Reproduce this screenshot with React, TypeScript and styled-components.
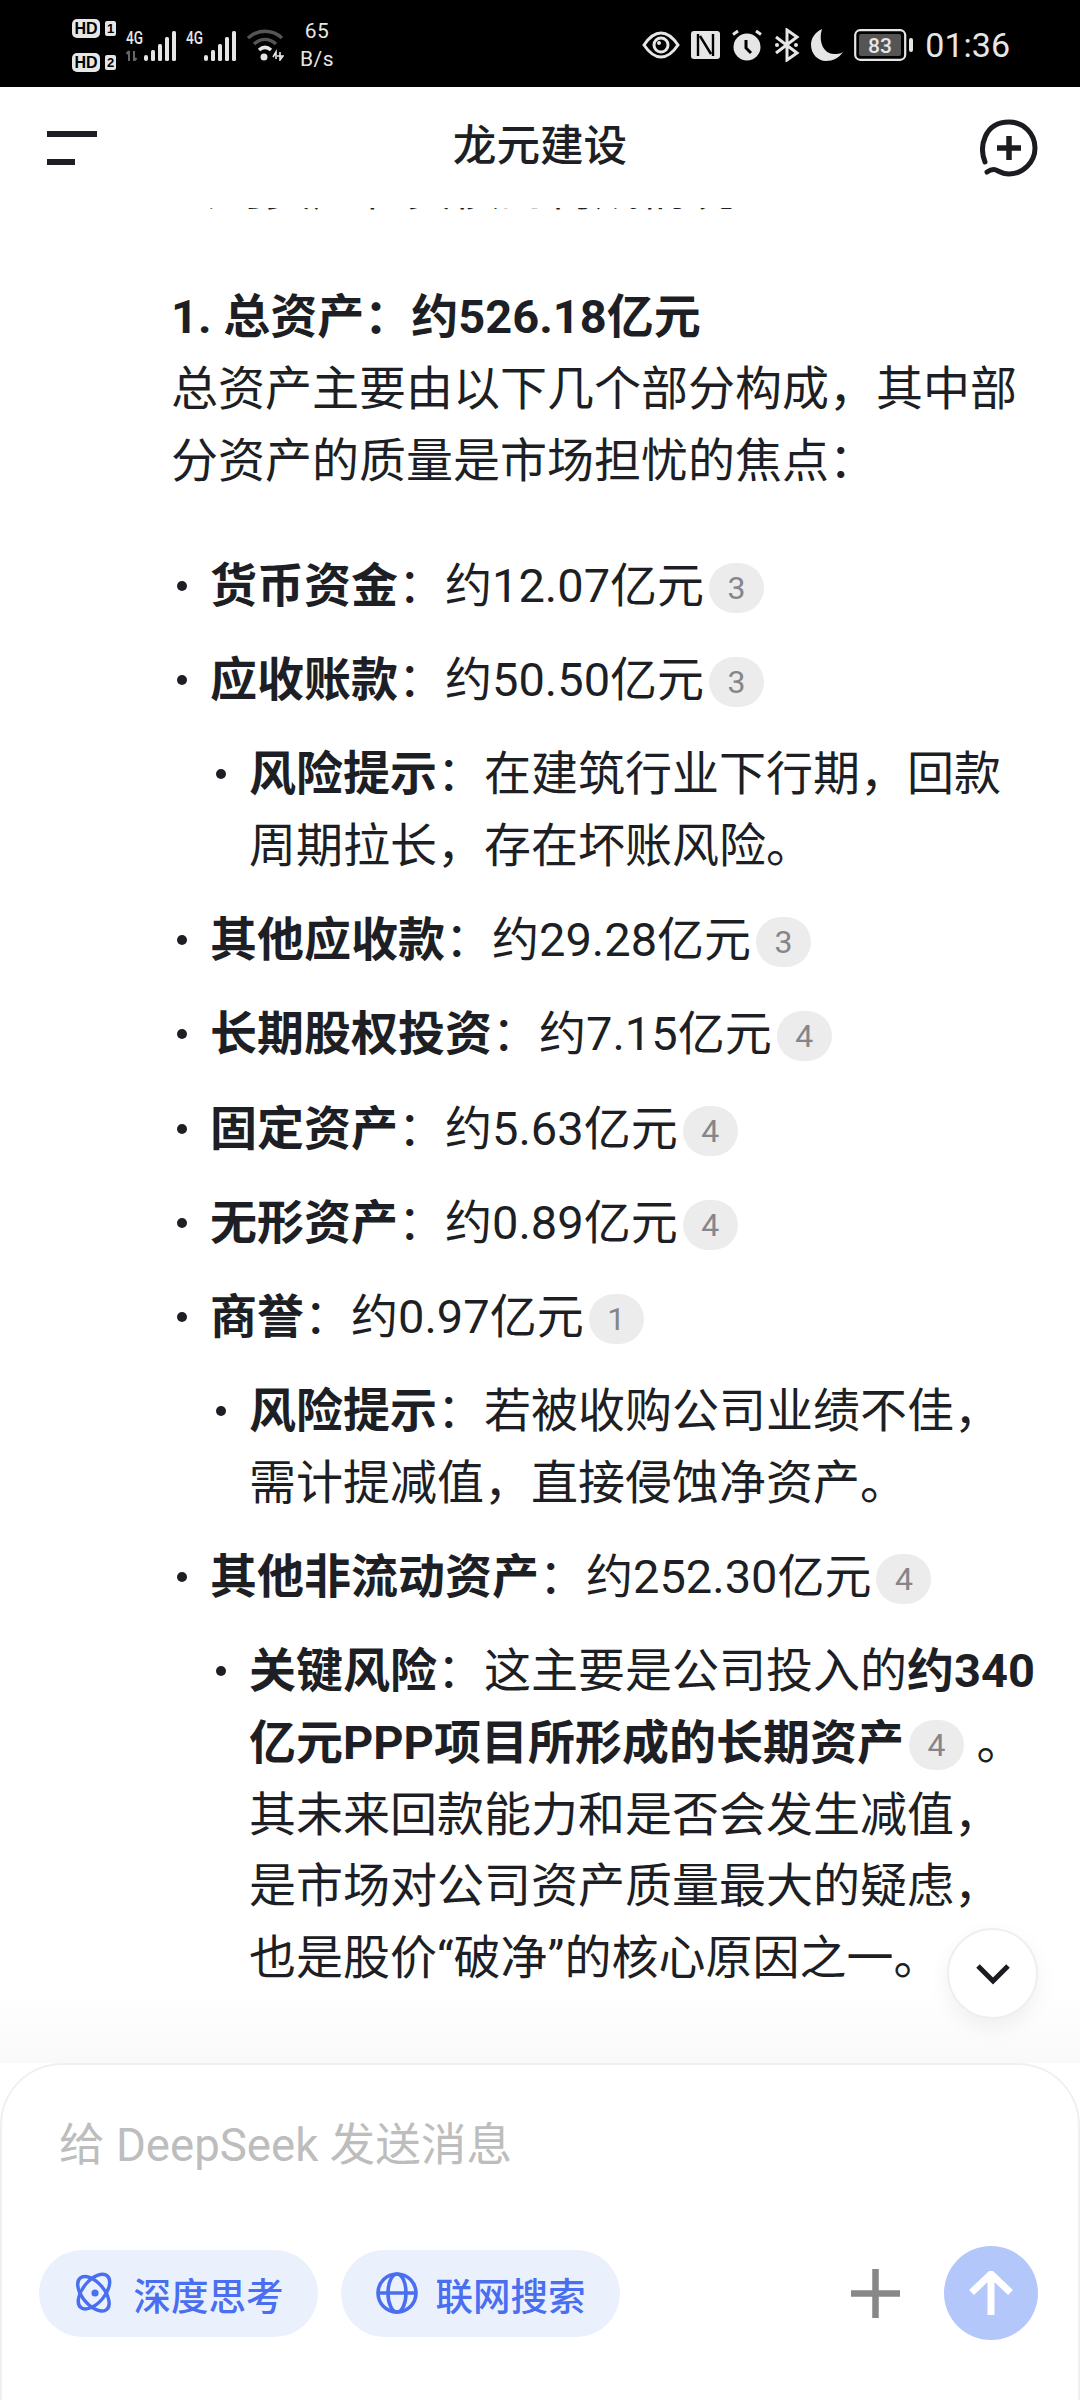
import React from "react";
import styled, { createGlobalStyle } from "styled-components";

const Global = createGlobalStyle`
  html, body { margin: 0; padding: 0; background: #fff; }
  * { box-sizing: border-box; }
`;

const Page = styled.div`
  width: 1080px;
  height: 2400px;
  display: flex;
  flex-direction: column;
  overflow: hidden;
  background: #fff;
  font-family: Roboto, "Noto Sans CJK SC", sans-serif;
  color: #1d1f25;
`;

const StatusBar = styled.div`
  flex: none;
  height: 87px;
  background: #000;
  color: #e6e6e6;
  display: flex;
  align-items: center;
  justify-content: space-between;
  padding: 3px 70px 0 72px;
`;

const StatusGroup = styled.div<{ $gap: number }>`
  display: flex;
  align-items: center;
  gap: ${(p) => p.$gap}px;
`;

const SimColumn = styled.div`
  display: flex;
  flex-direction: column;
  gap: 15px;
`;

const SimRow = styled.div`
  display: flex;
  align-items: center;
  gap: 5px;
`;

const HdBadge = styled.span`
  width: 28px;
  height: 19px;
  border-radius: 5px;
  background: #e6e6e6;
  color: #000;
  font: 700 16px/19px "Liberation Sans", sans-serif;
  text-align: center;
`;

const SimNumber = styled.span`
  width: 11px;
  height: 15px;
  border-radius: 2px;
  background: #e6e6e6;
  color: #000;
  font: 700 13px/15px "Liberation Sans", sans-serif;
  text-align: center;
`;

const Speed = styled.div`
  width: 40px;
  margin-left: 3px;
  text-align: center;
  font: 400 21px/28.5px Roboto, sans-serif;
  letter-spacing: 0.5px;
`;

const Clock = styled.span`
  font: 400 34px/40px Roboto, sans-serif;
`;

const Header = styled.header`
  flex: none;
  height: 121px;
  display: flex;
  align-items: center;
  justify-content: space-between;
  padding: 0 42px 0 47px;
  position: relative;
`;

const Title = styled.h1`
  position: absolute;
  left: 0;
  right: 0;
  margin: 0;
  text-align: center;
  font-size: 43.6px;
  line-height: 60px;
  font-weight: 500;
  transform: translateY(-1px);
`;

const Main = styled.main`
  flex: 1;
  min-height: 0;
  position: relative;
  overflow: hidden;
`;

const Article = styled.article`
  margin-top: -55px;
  padding: 0 38px 0 171px;
  font-size: 47px;
  line-height: 71.7px;
`;

const Paragraph = styled.p`
  margin: 0;
`;

const Heading = styled.h3`
  margin: 56.5px 0 0;
  font-size: 47px;
  line-height: 71.7px;
  font-weight: 700;
`;

const List = styled.ul<{ $nested?: boolean }>`
  list-style: none;
  margin: ${(p) => (p.$nested ? "22.5px 0 0" : "53.5px 0 0")};
  padding: 0 0 0 39px;
`;

const Item = styled.li`
  position: relative;
  & + & {
    margin-top: 22.5px;
  }
  &::before {
    content: "";
    position: absolute;
    left: -33px;
    top: 31px;
    width: 10px;
    height: 10px;
    border-radius: 50%;
    background: #1d1f25;
  }
`;

const Strong = styled.strong`
  font-weight: 700;
`;

const Cite = styled.span`
  display: inline-block;
  width: 55px;
  height: 50px;
  margin: 0 1px 0 5px;
  border-radius: 25px;
  background: #ececec;
  color: #85858a;
  font-size: 32px;
  line-height: 50px;
  text-align: center;
  vertical-align: 3px;
`;

const Fade = styled.div`
  position: absolute;
  left: 0;
  right: 0;
  bottom: 0;
  height: 70px;
  background: linear-gradient(to bottom, rgba(250, 250, 250, 0), #f9f9f9);
`;

const ScrollButton = styled.button`
  position: absolute;
  left: 947px;
  top: 1720px;
  width: 91px;
  height: 91px;
  padding: 0;
  border-radius: 50%;
  border: 2px solid #efefef;
  background: #fff;
  box-shadow: 0 8px 22px rgba(0, 0, 0, 0.06);
  display: flex;
  align-items: center;
  justify-content: center;
`;

const Composer = styled.section`
  flex: none;
  height: 337px;
  background: #fff;
  border: 2px solid #f0f0f0;
  border-bottom: none;
  border-radius: 62px 62px 0 0;
  padding: 49px 40px 0 37px;
  display: flex;
  flex-direction: column;
`;

const Placeholder = styled.div`
  padding-left: 20px;
  font-size: 45.6px;
  line-height: 64px;
  color: #bdbdbd;
`;

const Tools = styled.div`
  margin-top: 68px;
  display: flex;
  align-items: center;
`;

const Pill = styled.button`
  width: 279px;
  height: 87px;
  margin-right: 23px;
  padding: 0;
  border: none;
  border-radius: 44px;
  background: #eaf1fd;
  color: #4a6ef0;
  font-family: Roboto, "Noto Sans CJK SC", sans-serif;
  font-size: 37.5px;
  font-weight: 500;
  display: flex;
  align-items: center;
  justify-content: center;
  gap: 18px;
`;

const Spacer = styled.div`
  flex: 1;
`;

const AddButton = styled.div`
  width: 49px;
  height: 49px;
  margin-right: 44px;
  display: flex;
`;

const SendButton = styled.button`
  width: 94px;
  height: 94px;
  padding: 0;
  border: none;
  border-radius: 50%;
  background: #b3c7fb;
  display: flex;
  align-items: center;
  justify-content: center;
`;

const Bars = ({ arrows }: { arrows?: boolean }) => (
  <svg width="50" height="32" viewBox="0 0 50 32">
    <text x="0" y="15" fontFamily="Roboto" fontSize="19" fontWeight="500" fill="#e6e6e6" textLength="17" lengthAdjust="spacingAndGlyphs">4G</text>
    {arrows && <path d="M3 32v-10M0.5 25 3 22M8 22v10l2.5-3" stroke="#666" strokeWidth="2" fill="none" />}
    <rect x="18" y="26" width="4" height="6" rx="2" fill="#e6e6e6" />
    <rect x="25" y="21" width="4" height="11" rx="1.5" fill="#e6e6e6" />
    <rect x="32" y="15" width="4" height="17" rx="1.5" fill="#e6e6e6" />
    <rect x="39" y="8" width="4" height="24" rx="1.5" fill="#e6e6e6" />
    <rect x="46" y="2" width="4" height="30" rx="1.5" fill="#e6e6e6" />
  </svg>
);

const Wifi = () => (
  <svg width="38" height="32" viewBox="0 0 38 32" fill="none">
    <path d="M2 9C12 0 26 0 36 9" stroke="#555" strokeWidth="3.5" />
    <path d="M8 15c7-6 15-6 22 0" stroke="#555" strokeWidth="3.5" />
    <path d="M13 21c4-3.5 8-3.5 12 0" stroke="#e6e6e6" strokeWidth="3.5" />
    <circle cx="18" cy="28" r="3.5" fill="#e6e6e6" />
    <path d="M27 28l3-5v7M34 23v8l3-4h-6" stroke="#e6e6e6" strokeWidth="1.6" />
  </svg>
);

const Eye = () => (
  <svg width="38" height="28" viewBox="0 0 38 28" fill="none">
    <path d="M2 14C8 5 13 2 19 2s11 3 17 12c-6 9-11 12-17 12S8 23 2 14Z" stroke="#e6e6e6" strokeWidth="3" />
    <circle cx="19" cy="14" r="7" stroke="#e6e6e6" strokeWidth="3" />
    <circle cx="17" cy="12" r="2" fill="#e6e6e6" />
  </svg>
);

const Nfc = () => (
  <svg width="29" height="28" viewBox="0 0 29 28">
    <rect width="29" height="28" rx="3" fill="#e6e6e6" />
    <path d="M7 3v22M22 3v22M9 5l11 18" stroke="#000" strokeWidth="2.4" fill="none" />
  </svg>
);

const Alarm = () => (
  <svg width="32" height="32" viewBox="0 0 32 32">
    <circle cx="16" cy="18" r="13.5" fill="#e6e6e6" />
    <path d="M2 5.5 7 2M30 5.5 25 2" stroke="#e6e6e6" strokeWidth="3" fill="none" />
    <path d="M15 11v8l5 5" stroke="#000" strokeWidth="3" fill="none" />
  </svg>
);

const Bluetooth = () => (
  <svg width="26" height="34" viewBox="0 0 26 34" fill="none">
    <path d="M2 9l21 16-10 7V2l10 7L2 25" stroke="#e6e6e6" strokeWidth="3" />
    <circle cx="3" cy="17" r="2" fill="#e6e6e6" />
    <circle cx="22" cy="17" r="2" fill="#e6e6e6" />
  </svg>
);

const Moon = () => (
  <svg width="32" height="32" viewBox="0 0 32 32">
    <path d="M11 0C3 4 0 10 0 16c0 9 7 16 15 16 7 0 13-3 17-9-3 2-6 2-9 2C13 25 7 13 11 0Z" fill="#e6e6e6" />
  </svg>
);

const Battery = () => (
  <svg width="60" height="32" viewBox="0 0 60 32">
    <rect x="1.2" y="1.2" width="50" height="29.6" rx="5" fill="none" stroke="#e6e6e6" strokeWidth="2.2" />
    <rect x="5" y="5" width="42" height="22" rx="2" fill="#555" />
    <text x="26" y="24" textAnchor="middle" fontFamily="Roboto" fontSize="21" fontWeight="500" fill="#e6e6e6">83</text>
    <rect x="55" y="9" width="4" height="14" rx="2" fill="#e6e6e6" />
  </svg>
);

const MenuIcon = () => (
  <svg width="50" height="34" viewBox="0 0 50 34">
    <rect y="0" width="50" height="6" fill="#1d1f25" />
    <rect y="28" width="28" height="6" fill="#1d1f25" />
  </svg>
);

const NewChatIcon = () => (
  <svg width="58" height="58" viewBox="0 0 58 58" fill="none" stroke="#1a1c20" strokeWidth="5" strokeLinecap="round">
    <path d="M5 43C-1 28 4 3 29 3c15 0 26 12 26 26S43 55 29 55c-6 0-9-2-13-4-3-1-6 0-9 2" />
    <path d="M29 17v24M17 29h24" strokeWidth="5.5" strokeLinecap="butt" />
  </svg>
);

const Chevron = () => (
  <svg width="36" height="22" viewBox="0 0 36 22" fill="none">
    <path d="M3 3l15 15L33 3" stroke="#1a1c20" strokeWidth="5" />
  </svg>
);

const AtomIcon = () => (
  <svg width="42" height="42" viewBox="0 0 42 42" fill="none" stroke="#4a6ef0" strokeWidth="3.6">
    <ellipse cx="21" cy="21" rx="12" ry="21" transform="rotate(-40 21 21) scale(.92 .98)" />
    <ellipse cx="21" cy="21" rx="12" ry="21" transform="rotate(40 21 21) scale(.92 .98)" />
    <circle cx="21" cy="21" r="3.6" fill="#4a6ef0" stroke="none" />
  </svg>
);

const GlobeIcon = () => (
  <svg width="42" height="42" viewBox="0 0 42 42" fill="none" stroke="#4a6ef0" strokeWidth="3.6">
    <circle cx="21" cy="21" r="19" />
    <ellipse cx="21" cy="21" rx="9" ry="19" />
    <path d="M2 21h38" />
  </svg>
);

const PlusIcon = () => (
  <svg width="49" height="49" viewBox="0 0 49 49">
    <path d="M24.5 0v49M0 24.5h49" stroke="#888" strokeWidth="6.5" />
  </svg>
);

const ArrowUp = () => (
  <svg width="44" height="44" viewBox="0 0 44 44" fill="none">
    <path d="M22 44V3M2.5 21.5 22 3l19.5 18.5" stroke="#fff" strokeWidth="7" />
  </svg>
);

export default function App() {
  return (
    <Page>
      <Global />
      <StatusBar>
        <StatusGroup $gap={10}>
          <SimColumn>
            <SimRow><HdBadge>HD</HdBadge><SimNumber>1</SimNumber></SimRow>
            <SimRow><HdBadge>HD</HdBadge><SimNumber>2</SimNumber></SimRow>
          </SimColumn>
          <Bars arrows />
          <Bars />
          <Wifi />
          <Speed>65<br />B/s</Speed>
        </StatusGroup>
        <StatusGroup $gap={11}>
          <Eye />
          <Nfc />
          <Alarm />
          <Bluetooth />
          <Moon />
          <Battery />
          <Clock>01:36</Clock>
        </StatusGroup>
      </StatusBar>

      <Header>
        <MenuIcon />
        <Title>龙元建设</Title>
        <NewChatIcon />
      </Header>

      <Main>
        <Article>
          <Paragraph>公司资产和负债的构成情况</Paragraph>
          <Heading>1. 总资产：约526.18亿元</Heading>
          <Paragraph>总资产主要由以下几个部分构成，其中部分资产的质量是市场担忧的焦点：</Paragraph>
          <List>
            <Item><Strong>货币资金</Strong>：约12.07亿元<Cite>3</Cite></Item>
            <Item>
              <Strong>应收账款</Strong>：约50.50亿元<Cite>3</Cite>
              <List $nested>
                <Item><Strong>风险提示</Strong>：在建筑行业下行期，回款周期拉长，存在坏账风险。</Item>
              </List>
            </Item>
            <Item><Strong>其他应收款</Strong>：约29.28亿元<Cite>3</Cite></Item>
            <Item><Strong>长期股权投资</Strong>：约7.15亿元<Cite>4</Cite></Item>
            <Item><Strong>固定资产</Strong>：约5.63亿元<Cite>4</Cite></Item>
            <Item><Strong>无形资产</Strong>：约0.89亿元<Cite>4</Cite></Item>
            <Item>
              <Strong>商誉</Strong>：约0.97亿元<Cite>1</Cite>
              <List $nested>
                <Item><Strong>风险提示</Strong>：若被收购公司业绩不佳，需计提减值，直接侵蚀净资产。</Item>
              </List>
            </Item>
            <Item>
              <Strong>其他非流动资产</Strong>：约252.30亿元<Cite>4</Cite>
              <List $nested>
                <Item>
                  <Strong>关键风险</Strong>：这主要是公司投入的<Strong>约340亿元PPP项目所形成的长期资产</Strong><Cite>4</Cite> 。其未来回款能力和是否会发生减值，是市场对公司资产质量最大的疑虑，也是股价“破净”的核心原因之一。
                </Item>
              </List>
            </Item>
          </List>
        </Article>
        <Fade />
        <ScrollButton aria-label="scroll to bottom"><Chevron /></ScrollButton>
      </Main>

      <Composer>
        <Placeholder>给 DeepSeek 发送消息</Placeholder>
        <Tools>
          <Pill><AtomIcon />深度思考</Pill>
          <Pill><GlobeIcon />联网搜索</Pill>
          <Spacer />
          <AddButton><PlusIcon /></AddButton>
          <SendButton aria-label="send"><ArrowUp /></SendButton>
        </Tools>
      </Composer>
    </Page>
  );
}
